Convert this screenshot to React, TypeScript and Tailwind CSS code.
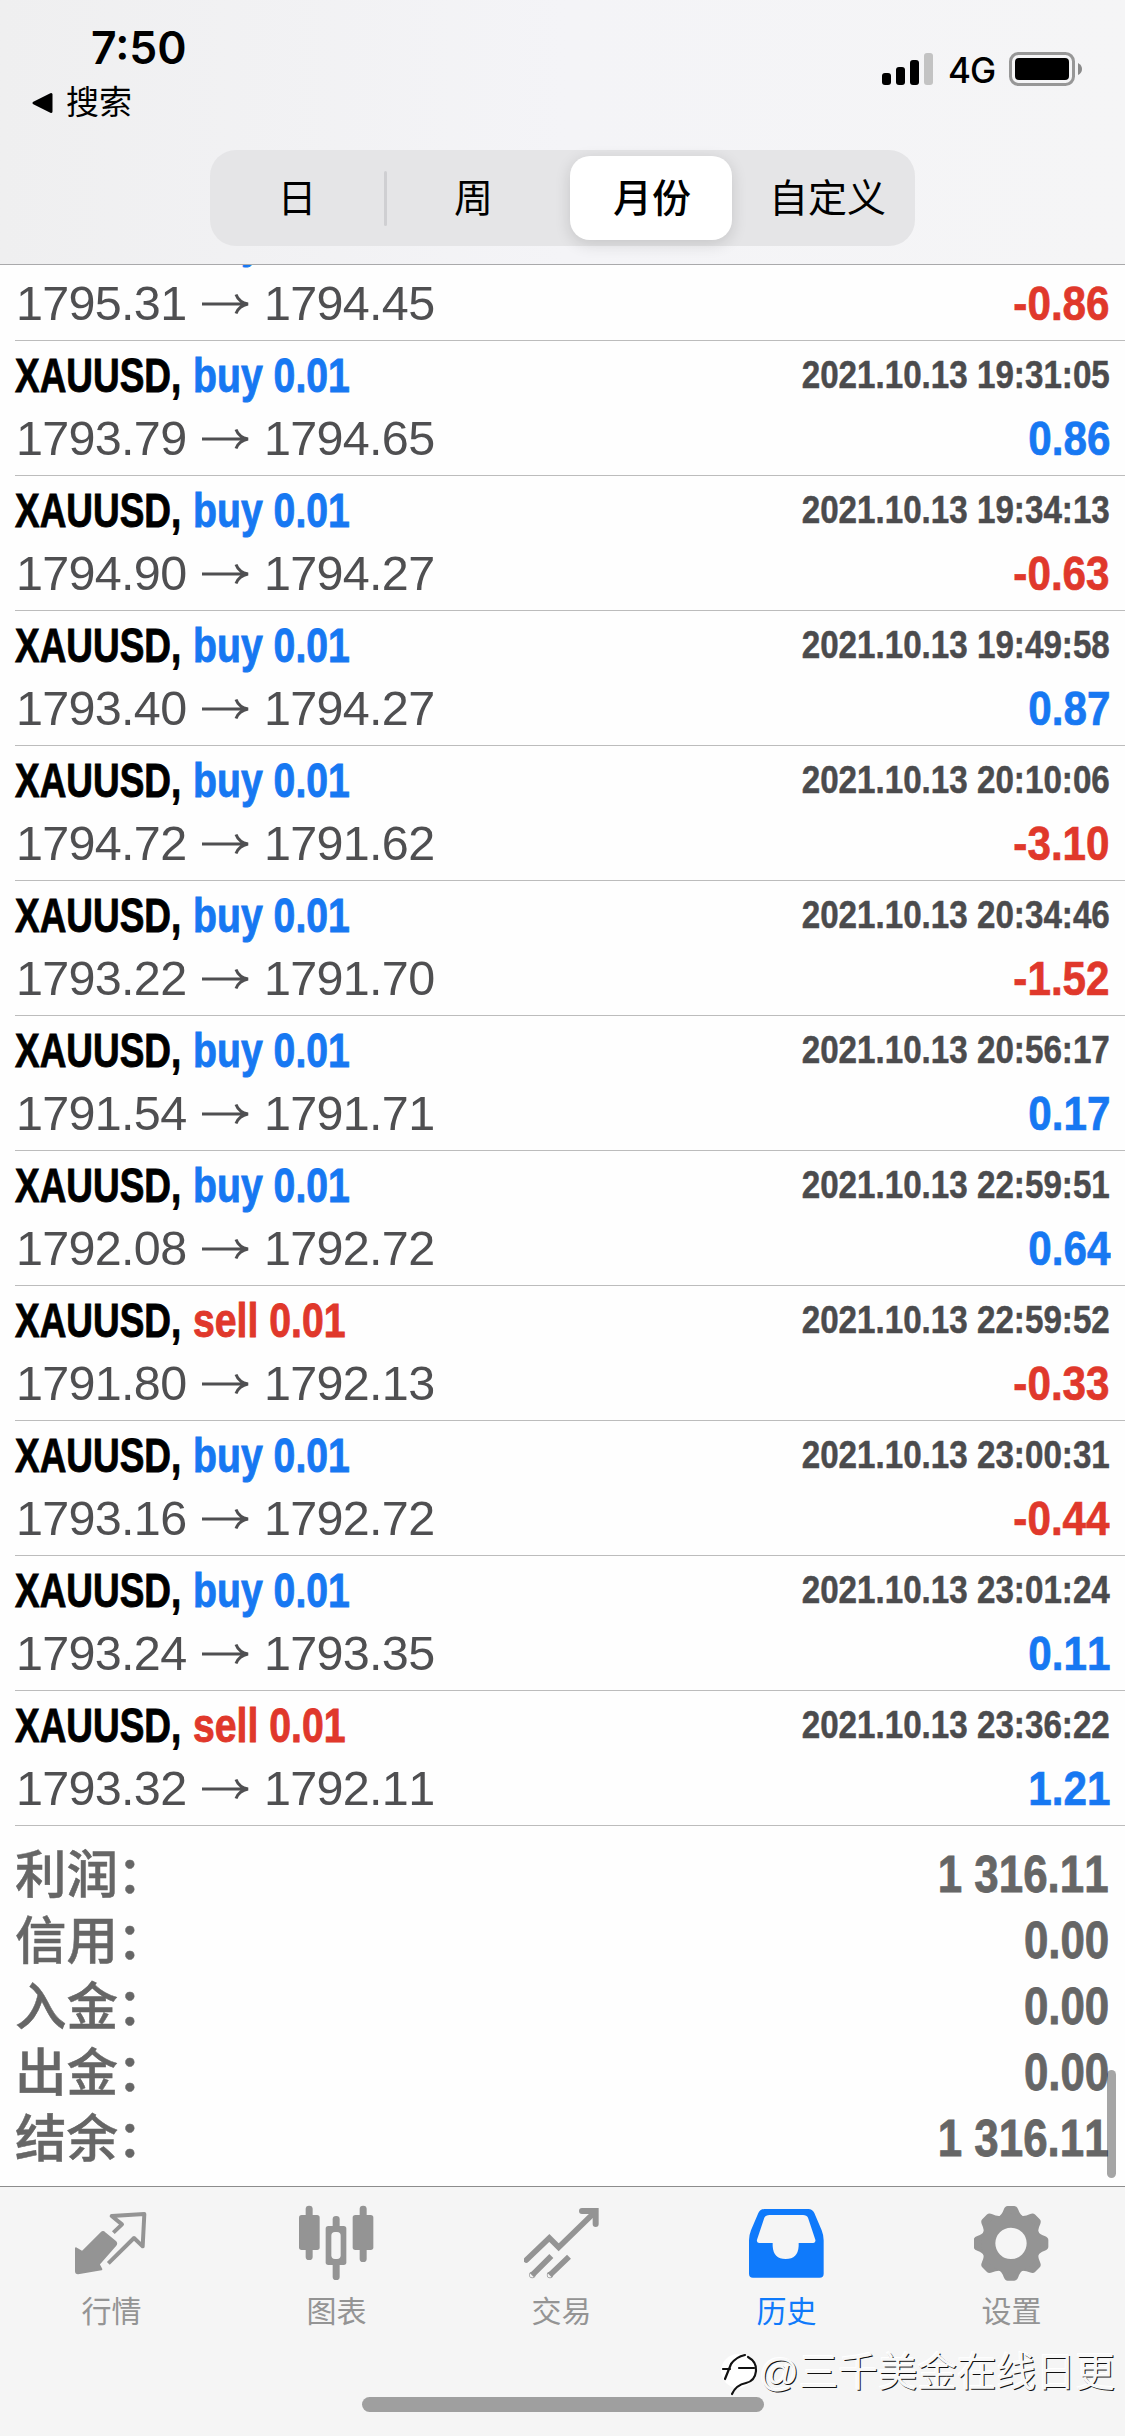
import * as React from "react";
import { clsx } from "clsx";

type Deal = {
  side: "buy" | "sell";
  open: string;
  close: string;
  time?: string;
  profit: string;
};

const deals: Deal[] = [
  { side: "buy", open: "1795.31", close: "1794.45", profit: "-0.86" },
  { side: "buy", open: "1793.79", close: "1794.65", time: "2021.10.13 19:31:05", profit: "0.86" },
  { side: "buy", open: "1794.90", close: "1794.27", time: "2021.10.13 19:34:13", profit: "-0.63" },
  { side: "buy", open: "1793.40", close: "1794.27", time: "2021.10.13 19:49:58", profit: "0.87" },
  { side: "buy", open: "1794.72", close: "1791.62", time: "2021.10.13 20:10:06", profit: "-3.10" },
  { side: "buy", open: "1793.22", close: "1791.70", time: "2021.10.13 20:34:46", profit: "-1.52" },
  { side: "buy", open: "1791.54", close: "1791.71", time: "2021.10.13 20:56:17", profit: "0.17" },
  { side: "buy", open: "1792.08", close: "1792.72", time: "2021.10.13 22:59:51", profit: "0.64" },
  { side: "sell", open: "1791.80", close: "1792.13", time: "2021.10.13 22:59:52", profit: "-0.33" },
  { side: "buy", open: "1793.16", close: "1792.72", time: "2021.10.13 23:00:31", profit: "-0.44" },
  { side: "buy", open: "1793.24", close: "1793.35", time: "2021.10.13 23:01:24", profit: "0.11" },
  { side: "sell", open: "1793.32", close: "1792.11", time: "2021.10.13 23:36:22", profit: "1.21" }
];

const totals = [
  { label: "利润", value: "1 316.11" },
  { label: "信用", value: "0.00" },
  { label: "入金", value: "0.00" },
  { label: "出金", value: "0.00" },
  { label: "结余", value: "1 316.11" }
];

function StatusBar() {
  return (
    <div className="flex h-[150px] justify-between">
      <div className="pl-[31px] pt-[20px]">
        <div className="pl-[60px] font-['Inter'] text-[44.5px] font-semibold leading-[56px]">7:50</div>
        <div className="mt-[3px] flex items-center gap-[12px]">
          <svg width="23" height="22" viewBox="0 0 23 22">
            <path d="M3 11 L20 2.5 V19.5 Z" fill="#000" stroke="#000" strokeWidth="3" strokeLinejoin="round" />
          </svg>
          <span className="text-[33px] leading-[48px]">搜索</span>
        </div>
      </div>
      <div className="mt-[52px] flex h-[34px] items-center pr-[42px]">
        <svg width="52" height="34" viewBox="0 0 52 34">
          <rect x="0" y="21" width="9" height="12" rx="3" />
          <rect x="14" y="15" width="9" height="18" rx="3" />
          <rect x="28" y="8" width="9" height="25" rx="3" />
          <rect x="42" y="1" width="9" height="32" rx="3" fill="#c3c3c3" />
        </svg>
        <span className="ml-[14px] w-[46px] pt-0.5 font-['Inter'] text-[35px] font-medium leading-[34px] tracking-[-1px]">4G</span>
        <svg className="ml-[15px]" width="74" height="34" viewBox="0 0 74 34">
          <rect x="1.5" y="1.5" width="63" height="31" rx="8" fill="none" stroke="#979797" strokeWidth="3" />
          <rect x="6" y="6" width="54" height="22" rx="4" />
          <path d="M69 11 Q73 13 73 17 Q73 21 69 23 Z" fill="#8a8a8a" />
        </svg>
      </div>
    </div>
  );
}

function PeriodSwitch() {
  return (
    <div className="mx-auto flex h-24 w-[705px] items-center rounded-[26px] bg-[#e5e5e7] text-[39px]">
      <div className="w-[174px] pt-[3px] text-center">日</div>
      <div className="h-[55px] w-[3px] rounded bg-[#cfcfd2]" />
      <div className="w-[173px] pt-[3px] text-center">周</div>
      <div className="ml-[10px] flex h-[84px] w-[162px] items-center justify-center rounded-[20px] bg-white pl-0.5 pt-[3px] font-medium shadow-[0_4px_16px_rgba(0,0,0,0.14)]">
        月份
      </div>
      <div className="flex-1 pl-2 pt-[3px] text-center">自定义</div>
    </div>
  );
}

function DealRow({ deal }: { deal: Deal }) {
  return (
    <div className="ml-[15px] h-[135px] border-b border-[#bcbcbc] pr-[15px] [font-kerning:none]">
      <div className="flex justify-between whitespace-nowrap leading-[67px]">
        <div className="flex pt-px text-[49px] font-bold [-webkit-text-stroke:0.9px_currentColor]">
          <span className="w-[178px] origin-left scale-x-[0.754]">XAUUSD,</span>
          <span
            className={clsx(
              "origin-left scale-x-[0.8]",
              deal.side === "buy" ? "text-[#1778f2]" : "text-[#e0382b]"
            )}
          >
            {deal.side} 0.01
          </span>
        </div>
        {deal.time && (
          <span className="origin-right scale-x-[0.84] text-[39.5px] font-bold text-[#4b4b4d] [-webkit-text-stroke:0.5px_currentColor]">
            {deal.time}
          </span>
        )}
      </div>
      <div className="-mt-px flex justify-between text-[48.5px] leading-[61px]">
        <div className="flex items-center pl-px text-[#4f4f51]">
          <span className="w-[186px] tracking-[-0.7px]">{deal.open}</span>
          <svg width="47" height="22" viewBox="0 0 47 22" fill="none" stroke="currentColor" strokeWidth="3">
            <path d="M0 11 H45 M34 1.5 C36 7 41 10 46 11 C41 12 36 15 34 20.5" />
          </svg>
          <span className="ml-[15px] tracking-[-0.7px]">{deal.close}</span>
        </div>
        <span
          className={clsx(
            "origin-right scale-x-[0.87] font-bold [-webkit-text-stroke:0.7px_currentColor]",
            deal.profit.startsWith("-") ? "text-[#e0382b]" : "text-[#1778f2]"
          )}
        >
          {deal.profit}
        </span>
      </div>
    </div>
  );
}

function QuotesIcon() {
  return (
    <svg width="76" height="80" viewBox="0 0 228 240">
      <path
        d="M6 136 L25 147 L82 90 Q87 85 92 90 L124 116 Q129 121 124 127 L74 184 L82 199 L12 211 Q6 211 6 205 Z"
        fill="currentColor"
        stroke="currentColor"
        strokeWidth="6"
        strokeLinejoin="round"
      />
      <path
        d="M118 89 L144 64 L113 39 L211 33 L206 130 L180 105 L103 181"
        fill="none"
        stroke="currentColor"
        strokeWidth="12"
        strokeLinejoin="round"
      />
    </svg>
  );
}

function ChartIcon() {
  return (
    <svg width="76" height="80" viewBox="0 0 228 240" fill="currentColor">
      <rect x="0" y="36" width="62" height="105" rx="8" />
      <rect x="20" y="8" width="21" height="163" rx="10" />
      <rect x="80" y="69" width="62" height="117" rx="8" />
      <rect x="101" y="39" width="21" height="192" rx="10" />
      <rect x="97" y="87" width="28" height="81" rx="11" fill="#f5f5f5" />
      <rect x="161" y="36" width="62" height="105" rx="8" />
      <rect x="182" y="8" width="21" height="169" rx="10" />
    </svg>
  );
}

function TradeIcon() {
  return (
    <svg width="76" height="80" viewBox="0 0 228 240" fill="none" stroke="currentColor" strokeWidth="17">
      <path d="M7 171 L76 105 L104 133 L212 28" strokeLinecap="round" />
      <path d="M174 24 H215 V63" strokeLinecap="round" strokeWidth="18" />
      <path d="M24 217 L82 159 M77 217 L135 161" />
      <circle cx="25" cy="216" r="1" />
      <circle cx="78" cy="216" r="1" />
    </svg>
  );
}

function HistoryIcon() {
  return (
    <svg width="76" height="80" viewBox="0 0 228 240" fill="currentColor" fillRule="evenodd">
      <path d="M0 112 Q0 97 6 82 L28 30 Q34 18 46 18 H178 Q190 18 196 30 L218 82 Q224 97 224 112 V212 Q224 224 212 224 H12 Q0 224 0 212 Z M62 36 Q50 36 46 44 L24 110 Q22 120 30 120 H71 V129 Q73 168 110 168 Q147 168 149 129 V120 H193 Q201 120 199 110 L177 44 Q173 36 162 36 Z" />
    </svg>
  );
}

function SettingsIcon() {
  return (
    <svg width="76" height="80" viewBox="0 0 228 240" fill="currentColor">
      {[0, 45, 90, 135, 180, 225, 270, 315].map((angle) => (
        <path
          key={angle}
          transform={`rotate(${angle} 111 121)`}
          d="M70 44 Q84 36 89 20 Q93 9 101 9 H121 Q129 9 133 20 Q138 36 152 44 L111 70 Z"
        />
      ))}
      <circle cx="111" cy="121" r="68" fill="none" stroke="currentColor" strokeWidth="42" />
    </svg>
  );
}

const tabs = [
  { label: "行情", icon: <QuotesIcon /> },
  { label: "图表", icon: <ChartIcon /> },
  { label: "交易", icon: <TradeIcon /> },
  { label: "历史", icon: <HistoryIcon />, active: true },
  { label: "设置", icon: <SettingsIcon /> }
];

function Watermark() {
  return (
    <div className="absolute right-[10px] top-[2347px] flex items-center whitespace-nowrap text-[#f8f8f8]">
      <svg className="-mr-px mt-1" width="40" height="46" viewBox="0 0 40 46" fill="none" strokeLinecap="round">
        <circle cx="18" cy="20" r="17" fill="#fff" />
        <path
          d="M5 28 L11 13 Q16 6 25 4 M3 18 H10 M19 17 H34 M28 6 Q37 11 36 20 Q35 30 26 32 Q16 34 12 43"
          stroke="#111"
          strokeWidth="2.2"
        />
      </svg>
      <span className="text-[39.5px] leading-[50px] [text-shadow:1px_1px_0_#111,-1px_-1px_0_#fff]">@三千美金在线日更</span>
    </div>
  );
}

export default function App() {
  return (
    <div className="relative flex h-[2436px] w-[1125px] flex-col overflow-hidden bg-[#fefefe] font-['Liberation_Sans','Noto_Sans_CJK_SC',sans-serif] text-black">
      <header className="h-[265px] shrink-0 border-b border-[#a9a9ab] bg-linear-to-r from-[#efeff0] via-[#f4f4f7] to-[#f5f5f6]">
        <StatusBar />
        <PeriodSwitch />
      </header>

      <main className="relative flex-1 overflow-hidden">
        <div className="-mt-[59px]">
          {deals.map((deal) => (
            <DealRow key={`${deal.open}-${deal.close}`} deal={deal} />
          ))}
        </div>
        <div className="pl-[15px] pr-4 pt-4 text-[51px] leading-[66px] text-[#666] [font-kerning:none]">
          {totals.map((total) => (
            <div key={total.label} className="flex h-[66px] justify-between">
              <span className="text-[51.5px] font-medium [-webkit-text-stroke:0.5px_currentColor]">
                {total.label}
                <span className="-ml-px">：</span>
              </span>
              <span className="origin-right scale-x-[0.86] font-bold [-webkit-text-stroke:0.8px_currentColor]">
                {total.value}
              </span>
            </div>
          ))}
        </div>
        <div className="absolute bottom-2 right-[9px] h-[108px] w-[9px] rounded-full bg-black/35" />
      </main>

      <nav className="flex h-[250px] shrink-0 flex-col border-t border-[#8c8c8c] bg-[#f5f5f5]">
        <div className="-ml-px mr-px flex pt-4">
          {tabs.map((tab) => (
            <div
              key={tab.label}
              className={clsx("flex flex-1 flex-col items-center", tab.active ? "text-[#0f7afb]" : "text-[#949494]")}
            >
              {tab.icon}
              <span className="mt-[7px] text-[30px] leading-[44px]">{tab.label}</span>
            </div>
          ))}
        </div>
        <div className="ml-[362px] mt-[63px] h-[15px] w-[402px] rounded-full bg-[#9f9f9f]" />
      </nav>

      <Watermark />
    </div>
  );
}
